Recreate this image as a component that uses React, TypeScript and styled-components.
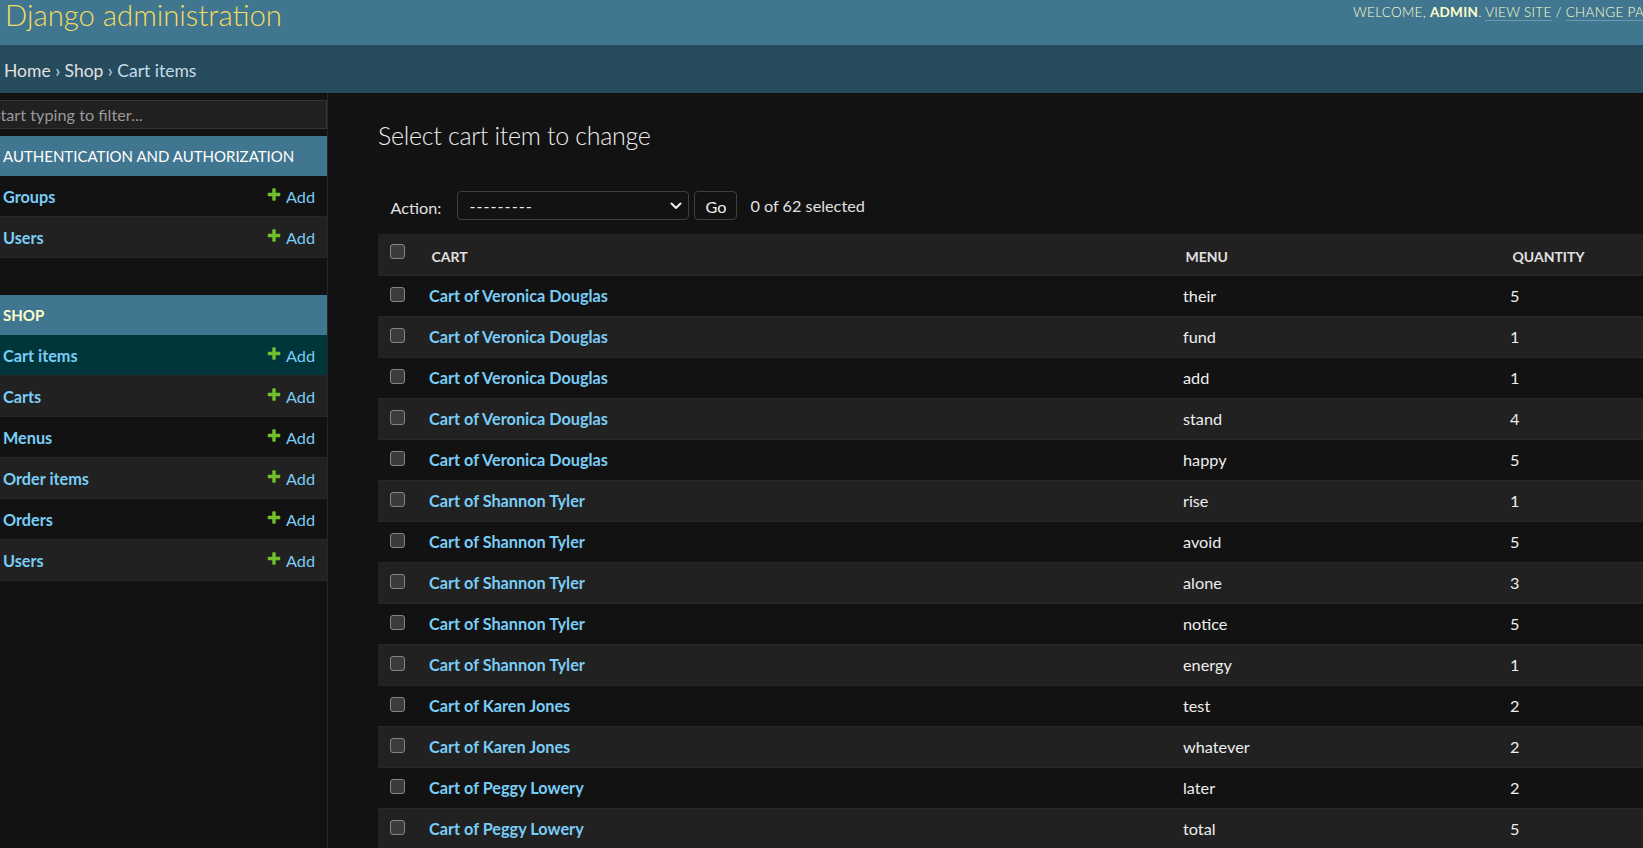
import React from 'react';
import styled, { createGlobalStyle } from 'styled-components';

const FONT = `Lato, "Open Sans", "Liberation Sans", sans-serif`;

const GlobalStyle = createGlobalStyle`
  html, body { margin: 0; padding: 0; background: #121212; overflow: hidden; }
  body { font-family: ${FONT}; color: #eeeeee; font-size: 16.25px; }
  #root { width: 1643px; height: 848px; overflow: hidden; }
  * { box-sizing: border-box; }
`;

const Page = styled.div`
  display: flex;
  flex-direction: column;
  height: 848px;
  width: 1643px;
  overflow: hidden;
`;

const Header = styled.header`
  flex: none;
  display: flex;
  align-items: flex-start;
  height: 45px;
  background: #417690;
  overflow: hidden;
  white-space: nowrap;
`;

const Branding = styled.div`
  flex: 0 0 1353px;
  padding: 1px 0 0 5px;
`;

const SiteName = styled.h1`
  margin: 0;
  font-size: 29.3px;
  font-weight: 300;
  line-height: 27px;
  color: #f5dd5d;
`;

const UserTools = styled.div`
  flex: none;
  padding-top: 4px;
  font-size: 13.5px;
  line-height: 16px;
  letter-spacing: 0.3px;
  text-transform: uppercase;
  color: #ffffcc;
  font-weight: 300;
`;

const UserName = styled.strong`
  font-weight: 700;
`;

const ToolLink = styled.a`
  color: #ffffcc;
  text-decoration: none;
  border-bottom: 1px solid rgba(255, 255, 255, 0.25);
`;

const Breadcrumbs = styled.nav`
  flex: none;
  height: 48px;
  background: #264b5d;
  padding: 16px 0 0 4px;
  font-size: 17.5px;
  line-height: 20px;
  color: #c4dce8;
  white-space: nowrap;
`;

const Crumb = styled.a`
  color: #e0e0e0;
  text-decoration: none;
`;

const Body = styled.div`
  flex: 1;
  display: flex;
  min-height: 0;
`;

const Sidebar = styled.aside`
  flex: 0 0 328px;
  border-right: 1px solid #272727;
  overflow: hidden;
`;

const Filter = styled.input`
  display: block;
  width: calc(100% + 12px);
  height: 29px;
  margin: 7px 0 7px -12px;
  padding: 0 0 0 3px;
  background: #212121;
  border: 1px solid #353535;
  color: #eeeeee;
  font-family: ${FONT};
  font-size: 16.25px;
  outline: none;
  &::placeholder { color: #9a9a9a; }
`;

const Module = styled.section`
  margin-bottom: 37px;
`;

const Caption = styled.div<{ $current?: boolean }>`
  height: 40px;
  padding: 10px 3px;
  line-height: 20px;
  background: #417690;
  font-size: 15px;
  text-transform: uppercase;
  white-space: nowrap;
  overflow: hidden;
  color: ${p => (p.$current ? '#ffffcc' : '#ffffff')};
  font-weight: ${p => (p.$current ? 700 : 400)};
`;

const NavRow = styled.div<{ $even: boolean; $selected?: boolean }>`
  display: flex;
  align-items: flex-start;
  justify-content: space-between;
  height: 41px;
  padding: 11px 12px 9px 3px;
  line-height: 20px;
  border-bottom: 1px solid #272727;
  background: ${p => (p.$selected ? '#00363a' : p.$even ? '#212121' : '#121212')};
`;

const NavName = styled.a`
  color: #79cdf6;
  font-weight: 700;
  text-decoration: none;
`;

const AddLink = styled.a`
  display: inline-flex;
  align-items: flex-start;
  gap: 4px;
  color: #79cdf6;
  text-decoration: none;
  & svg { flex: none; }
`;

const Main = styled.main`
  flex: 1;
  min-width: 0;
  overflow: hidden;
  padding: 27px 0 0 50px;
`;

const Title = styled.h1`
  margin: 0 0 28px;
  font-size: 25px;
  font-weight: 300;
  letter-spacing: -0.3px;
  line-height: 1.2;
  color: #eeeeee;
  white-space: nowrap;
`;

const ActionBar = styled.div`
  display: flex;
  align-items: center;
  width: 1420px;
  padding: 13px 12.5px 14px;
  color: #e0e0e0;
`;

const ActionLabel = styled.label`
  margin: 3px 16px 0 0;
`;

const SelectBox = styled.div`
  display: flex;
  align-items: center;
  justify-content: space-between;
  width: 232px;
  height: 29px;
  padding: 0 6px 0 11px;
  border: 1px solid #3f3f3f;
  border-radius: 4px;
  color: #eeeeee;
  letter-spacing: 1px;
`;

const GoButton = styled.button`
  width: 43px;
  height: 29px;
  margin-left: 5px;
  padding: 2px 0 0;
  background: #121212;
  border: 1px solid #3f3f3f;
  border-radius: 4px;
  color: #eeeeee;
  font-family: ${FONT};
  font-size: 16.25px;
`;

const Counter = styled.span`
  margin-left: 13px;
`;

const Table = styled.table`
  width: 1420px;
  border-collapse: collapse;
  table-layout: fixed;
`;

const HeadCell = styled.th<{ $box?: boolean }>`
  height: 41px;
  padding: ${p => (p.$box ? '10px 0 0 12px' : '13px 12.5px 0')};
  vertical-align: top;
  text-align: left;
  background: #212121;
  border-bottom: 1px solid #272727;
  color: #e0e0e0;
  font-size: 14px;
  font-weight: 700;
  line-height: 20px;
  text-transform: uppercase;
`;

const Row = styled.tr<{ $even: boolean }>`
  background: ${p => (p.$even ? '#212121' : '#121212')};
`;

const Cell = styled.td<{ $box?: boolean }>`
  height: 41px;
  padding: ${p => (p.$box ? '11px 0 0 12px' : '10px')};
  vertical-align: top;
  line-height: 20px;
  font-size: 16.25px;
  border-bottom: 1px solid #272727;
  color: #eeeeee;
  white-space: nowrap;
`;

const RowLink = styled.a`
  color: #79cdf6;
  font-weight: 700;
  text-decoration: none;
`;

const Check = styled.input.attrs({ type: 'checkbox' })`
  appearance: none;
  display: block;
  width: 15px;
  height: 15px;
  margin: 0;
  background: #3b3b3b;
  border: 1px solid #858585;
  border-radius: 3px;
`;

const PlusIcon = () => (
  <svg width="16" height="16" viewBox="0 0 1792 1792" aria-hidden="true">
    <path
      fill="#70bf2b"
      d="M1600 736v192q0 40-28 68t-68 28h-416v416q0 40-28 68t-68 28h-192q-40 0-68-28t-28-68v-416h-416q-40 0-68-28t-28-68v-192q0-40 28-68t68-28h416v-416q0-40 28-68t68-28h192q40 0 68 28t28 68v416h416q40 0 68 28t28 68z"
    />
  </svg>
);

const Chevron = () => (
  <svg width="12" height="8" viewBox="0 0 12 8" aria-hidden="true">
    <path d="M1.5 1.5 L6 6 L10.5 1.5" fill="none" stroke="#eeeeee" strokeWidth="2" strokeLinecap="round" strokeLinejoin="round" />
  </svg>
);

const modules = [
  { name: 'Authentication and Authorization', current: false, models: ['Groups', 'Users'] },
  { name: 'Shop', current: true, models: ['Cart items', 'Carts', 'Menus', 'Order items', 'Orders', 'Users'] },
];

const rows: [string, string, number][] = [
  ['Veronica Douglas', 'their', 5],
  ['Veronica Douglas', 'fund', 1],
  ['Veronica Douglas', 'add', 1],
  ['Veronica Douglas', 'stand', 4],
  ['Veronica Douglas', 'happy', 5],
  ['Shannon Tyler', 'rise', 1],
  ['Shannon Tyler', 'avoid', 5],
  ['Shannon Tyler', 'alone', 3],
  ['Shannon Tyler', 'notice', 5],
  ['Shannon Tyler', 'energy', 1],
  ['Karen Jones', 'test', 2],
  ['Karen Jones', 'whatever', 2],
  ['Peggy Lowery', 'later', 2],
  ['Peggy Lowery', 'total', 5],
  ['Peggy Lowery', 'plan', 3],
];

export default function App() {
  return (
    <>
      <GlobalStyle />
      <Page>
        <Header>
          <Branding>
            <SiteName>Django administration</SiteName>
          </Branding>
          <UserTools>
            Welcome, <UserName>admin</UserName>. <ToolLink href="#">View site</ToolLink> /{' '}
            <ToolLink href="#">Change password</ToolLink> / <ToolLink href="#">Log out</ToolLink>
          </UserTools>
        </Header>
        <Breadcrumbs>
          <Crumb href="#">Home</Crumb> › <Crumb href="#">Shop</Crumb> › Cart items
        </Breadcrumbs>
        <Body>
          <Sidebar>
            <Filter placeholder="Start typing to filter..." />
            {modules.map(m => (
              <Module key={m.name}>
                <Caption $current={m.current}>{m.name}</Caption>
                {m.models.map((model, i) => (
                  <NavRow key={model} $even={i % 2 === 1} $selected={m.current && i === 0}>
                    <NavName href="#">{model}</NavName>
                    <AddLink href="#">
                      <PlusIcon />
                      Add
                    </AddLink>
                  </NavRow>
                ))}
              </Module>
            ))}
          </Sidebar>
          <Main>
            <Title>Select cart item to change</Title>
            <ActionBar>
              <ActionLabel>Action:</ActionLabel>
              <SelectBox>
                <span>---------</span>
                <Chevron />
              </SelectBox>
              <GoButton>Go</GoButton>
              <Counter>0 of 62 selected</Counter>
            </ActionBar>
            <Table>
              <colgroup>
                <col style={{ width: 41 }} />
                <col style={{ width: 754 }} />
                <col style={{ width: 327 }} />
                <col />
              </colgroup>
              <thead>
                <tr>
                  <HeadCell $box>
                    <Check />
                  </HeadCell>
                  <HeadCell>Cart</HeadCell>
                  <HeadCell>Menu</HeadCell>
                  <HeadCell>Quantity</HeadCell>
                </tr>
              </thead>
              <tbody>
                {rows.map(([who, menu, qty], i) => (
                  <Row key={i} $even={i % 2 === 1}>
                    <Cell $box>
                      <Check />
                    </Cell>
                    <Cell>
                      <RowLink href="#">Cart of {who}</RowLink>
                    </Cell>
                    <Cell>{menu}</Cell>
                    <Cell>{qty}</Cell>
                  </Row>
                ))}
              </tbody>
            </Table>
          </Main>
        </Body>
      </Page>
    </>
  );
}
